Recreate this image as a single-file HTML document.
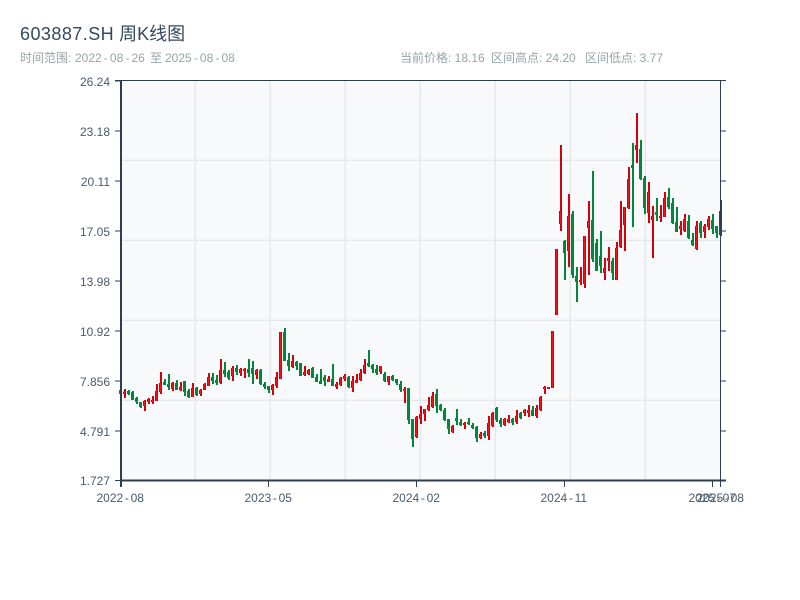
<!DOCTYPE html>
<html lang="zh-CN">
<head>
<meta charset="utf-8">
<title>603887.SH 周K线图</title>
<style>
html,body{margin:0;padding:0;background:#fff;}
body{width:800px;height:600px;overflow:hidden;position:relative;font-family:"Liberation Sans","Noto Sans CJK SC",sans-serif;}
.t{position:absolute;white-space:pre;}
#title{left:20px;top:23px;font-size:18px;line-height:22px;color:#34495e;}
#title b{font-weight:normal;letter-spacing:.45px;}
.s{top:51px;font-size:12px;line-height:15px;color:#95a5a6;}
.s i{font-style:normal;margin:0 2.1px;}
svg{position:absolute;left:0;top:0;}
svg text{font-family:"Liberation Sans",sans-serif;font-size:12px;fill:#4a5b6c;}
</style>
</head>
<body>
<div class="t" id="title"><b>603887.SH</b> 周K线图</div>
<div class="t s" style="left:20px">时间范围: </div>
<div class="t s" style="left:75px">2022<i>-</i>08<i>-</i>26</div>
<div class="t s" style="left:150px">至</div>
<div class="t s" style="left:165px">2025<i>-</i>08<i>-</i>08</div>
<div class="t s" style="left:400px">当前价格: 18.16</div>
<div class="t s" style="left:491px">区间高点: 24.20</div>
<div class="t s" style="left:585px">区间低点: 3.77</div>
<svg width="800" height="600" viewBox="0 0 800 600">
<rect x="120" y="80" width="600" height="400" fill="#f8f9fa"/>
<path d="M120 160.3H720M120 240.3H720M120 320.3H720M120 400.3H720M195.3 80V480M270.3 80V480M345.3 80V480M420.3 80V480M495.3 80V480M570.3 80V480M645.3 80V480" stroke="#e3e6eb" stroke-width="1.3" fill="none"/>

<defs>
<path id="bA" d="M44 155V162M104 183V198M116 177V186M128 180V186M140 153V183M152 129V156M188 129V147M212 141V150M248 144V171M272 150V162M284 132V150M296 111V138M332 90V129"/>
<path id="bB" d="M8 144V168M32 147V159M44 147V153M80 150V165M128 195V210M140 171V198M152 36V177M188 123V141M224 156V165M236 150V162M296 177V186M320 192V201M332 174V195M344 168V177"/>
<path id="bC" d="M38 123V144M50 120V129M62 99V120M74 75V99M122 78V96M146 108V126M194 147V153M230 231V291M242 222V237M254 207V222M266 195V210M278 168V201M338 258V276"/>
<path id="bD" d="M44 279V285M92 312V324M116 279V318M128 249V288M164 267V285M176 267V276M200 258V276M224 240V249M236 240V249M260 234V258M272 201V240M284 171V177M296 171V177M308 3V174"/>
<path id="bE" d="M35 327V525M47 213V252M71 228V333M107 420V426M119 288V432M131 243V264M179 384V399M191 354V363M215 324V420M227 270V321M239 201V255M251 117V204"/>
<path id="bF" d="M35 135V150M71 276V339M83 348V360M107 348V354M119 294V351M167 378V387M179 357V393M215 378V447M239 378V396M251 357V381M287 333V405"/>
</defs>

<!-- candles segment A -->
<g transform="translate(109.83 340) scale(.33333)" fill="none">
<path transform="translate(1.5 0)" stroke="#d4000c" stroke-width="6" d="M44 147V174M104 180V213M116 174V192M128 168V192M140 132V183M152 96V162M188 126V153M212 126V153M248 129V171M272 147V168M284 129V150M296 99V138M332 57V132"/>
<use href="#bA" stroke="#d4000c" stroke-width="9"/><use href="#bA" stroke="#f5101a" stroke-width="3"/>
<path transform="translate(1.5 0)" stroke="#00873c" stroke-width="6" d="M32 150V162M56 150V165M68 153V180M80 171V192M92 186V204M164 117V135M176 102V150M200 120V150M224 123V168M236 147V174M260 141V168M308 99V132M320 105V135M344 66V111M356 90V120"/>
<path stroke="#00873c" stroke-width="9" d="M32 150V162M56 153V162M68 156V180M80 174V186M92 186V201M164 126V135M176 132V141M200 129V150M224 123V156M236 153V171M260 144V165M308 111V123M320 120V129M344 90V102M356 96V114"/>
</g>
<!-- segment B -->
<g transform="translate(229.83 320) scale(.33333)" fill="none">
<path transform="translate(1.5 0)" stroke="#d4000c" stroke-width="6" d="M8 138V183M32 144V168M44 144V174M80 147V177M128 192V225M140 156V204M152 36V177M188 105V144M224 138V168M236 147V165M296 168V186M320 186V207M332 171V198M344 162V183"/>
<use href="#bB" stroke="#d4000c" stroke-width="9"/><use href="#bB" stroke="#f5101a" stroke-width="3"/>
<path transform="translate(1.5 0)" stroke="#00873c" stroke-width="6" d="M20 135V165M56 117V171M68 123V192M92 147V195M104 186V207M116 198V219M164 24V123M176 99V153M200 123V150M212 129V168M248 141V174M260 162V186M272 147V192M284 165V198M308 132V198M356 168V204"/>
<path stroke="#00873c" stroke-width="9" d="M20 144V156M56 147V159M68 144V162M92 150V192M104 192V201M116 198V210M164 36V123M176 120V138M200 126V138M212 129V168M248 144V174M260 171V186M272 183V192M284 171V183M308 177V198M356 171V201"/>
</g>
<!-- segment C -->
<g transform="translate(339.83 340) scale(.33333)" fill="none">
<path transform="translate(1.5 0)" stroke="#d4000c" stroke-width="6" d="M38 108V156M50 102V129M62 87V123M74 57V102M122 78V102M146 108V135M194 141V189M230 228V294M242 198V252M254 207V243M266 171V213M278 156V204M338 255V279"/>
<use href="#bC" stroke="#d4000c" stroke-width="9"/><use href="#bC" stroke="#f5101a" stroke-width="3"/>
<path transform="translate(1.5 0)" stroke="#00873c" stroke-width="6" d="M86 30V81M98 72V99M110 75V105M134 96V126M158 105V123M170 117V135M182 123V156M206 144V252M218 237V321M290 147V219M302 192V213M314 204V243M326 237V282M350 207V255"/>
<path stroke="#00873c" stroke-width="9" d="M86 69V78M98 75V87M110 87V99M134 102V123M158 108V120M170 117V129M182 132V150M206 144V240M218 237V297M290 162V198M302 195V210M314 210V240M326 237V267M350 234V243"/>
</g>
<!-- segment D -->
<g transform="translate(449.83 330) scale(.33333)" fill="none">
<path transform="translate(1.5 0)" stroke="#d4000c" stroke-width="6" d="M44 276V297M92 306V327M116 258V330M128 246V291M164 264V288M176 255V279M200 240V282M224 237V258M236 225V261M260 225V264M272 198V243M284 168V192M296 171V177M308 3V174"/>
<use href="#bD" stroke="#d4000c" stroke-width="9"/><use href="#bD" stroke="#f5101a" stroke-width="3"/>
<path transform="translate(1.5 0)" stroke="#00873c" stroke-width="6" d="M32 267V288M56 264V285M68 279V297M80 288V336M104 303V324M140 231V276M152 264V291M188 264V285M212 246V267M248 228V258"/>
<path stroke="#00873c" stroke-width="9" d="M32 276V285M56 276V282M68 285V294M80 291V324M104 309V318M140 234V270M152 270V282M188 267V279M212 249V264M248 240V258"/>
</g>
<!-- segment E -->
<g transform="translate(544.83 140) scale(.33333)" fill="none">
<path transform="translate(1.5 0)" stroke="#d4000c" stroke-width="6" d="M35 327V525M47 15V273M71 162V381M107 381V435M119 288V444M131 183V405M179 354V420M191 321V393M215 306V420M227 183V324M239 201V333M251 81V207"/>
<use href="#bE" stroke="#d4000c" stroke-width="9"/><use href="#bE" stroke="#f5101a" stroke-width="3"/>
<path transform="translate(1.5 0)" stroke="#00873c" stroke-width="6" d="M59 300V420M83 213V414M95 381V486M143 93V366M155 297V393M167 273V399M203 354V420M263 9V261"/>
<path stroke="#00873c" stroke-width="9" d="M59 303V339M83 222V405M95 408V426M143 240V357M155 309V393M167 348V378M203 363V399M263 75V84"/>
</g>
<!-- segment F -->
<g transform="translate(624.83 100) scale(.33333)" fill="none">
<path transform="translate(1.5 0)" stroke="#d4000c" stroke-width="6" d="M35 39V189M71 246V369M83 318V474M107 315V366M119 276V351M167 363V405M179 342V396M215 363V450M239 372V414M251 348V390M287 300V408"/>
<use href="#bF" stroke="#d4000c" stroke-width="9"/><use href="#bF" stroke="#f5101a" stroke-width="3"/>
<path transform="translate(1.5 0)" stroke="#00873c" stroke-width="6" d="M47 120V240M59 228V342M95 294V363M131 264V327M143 294V372M155 321V396M191 345V417M203 399V438M227 363V414M263 342V402M275 378V414"/>
<path stroke="#00873c" stroke-width="9" d="M47 147V237M59 234V324M95 336V345M131 291V321M143 309V369M155 366V396M191 363V414M203 420V435M227 369V399M263 360V387M275 378V399"/>
</g>

<!-- axes -->
<g fill="none" stroke="#2c3e50">
<path stroke-width="1" d="M115 80.5H726M720.5 80V487"/>
<path stroke-width="2" d="M121 80V487M120 480.5H726"/>
<path stroke-width="1" d="M115 81H120M115 131H120M115 181H120M115 231H120M115 281H120M115 331H120M115 381H120M115 431H120M115 480.5H120M720 131H726M720 181H726M720 231H726M720 281H726M720 331H726M720 381H726M720 431H726M268.5 481V487M416.5 481V487M564.5 481V487M712.5 481V487"/>
</g>

<!-- y labels -->
<g text-anchor="end">
<text x="110" y="86">26.24</text>
<text x="110" y="136">23.18</text>
<text x="110" y="186">20.11</text>
<text x="110" y="236">17.05</text>
<text x="110" y="286">13.98</text>
<text x="110" y="336">10.92</text>
<text x="110" y="386">7.856</text>
<text x="110" y="436">4.791</text>
<text x="110" y="485">1.727</text>
</g>
<!-- x labels -->
<g>
<text x="96.5" y="502">2022<tspan dx="1.7">-</tspan><tspan dx="1.7">08</tspan></text>
<text x="244.5" y="502">2023<tspan dx="1.7">-</tspan><tspan dx="1.7">05</tspan></text>
<text x="392.5" y="502">2024<tspan dx="1.7">-</tspan><tspan dx="1.7">02</tspan></text>
<text x="540.5" y="502">2024<tspan dx="1.7">-</tspan><tspan dx="1.7">11</tspan></text>
<text x="688.5" y="502">2025<tspan dx="1.7">-</tspan><tspan dx="1.7">07</tspan></text>
<text x="696.5" y="502">2025<tspan dx="1.7">-</tspan><tspan dx="1.7">08</tspan></text>
</g>
</svg>
</body>
</html>
